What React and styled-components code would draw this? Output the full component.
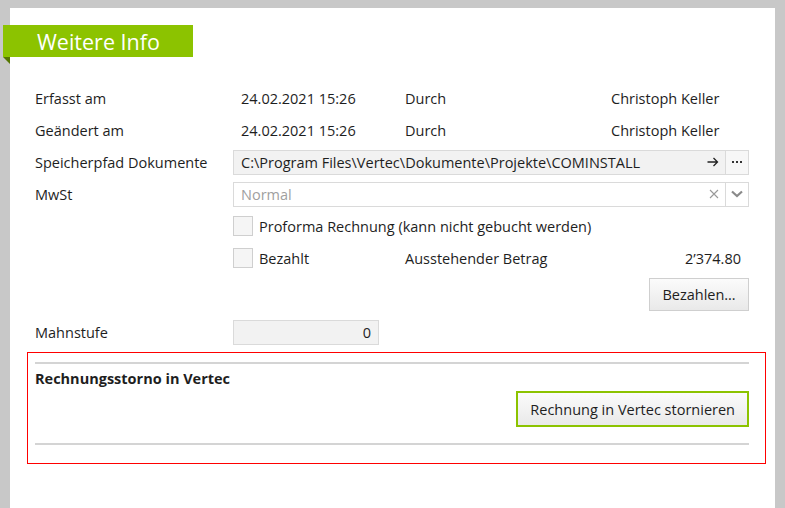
import styled, { createGlobalStyle } from 'styled-components'

const GlobalStyle = createGlobalStyle`
    html, body {
        margin: 0;
        padding: 0;
        background: #c8c8c8;
        font-family: "Open Sans", "Noto Sans", sans-serif;
        font-size: 14.5px;
        color: #1e1e1e;
    }
`;

const Page = styled.div`
    padding: 8px 10px 0 10px;
    height: 500px;
`;

const Panel = styled.div`
    background: #fff;
    height: 100%;
    padding-top: 17px;
    box-sizing: border-box;
`;

const HeaderTab = styled.div`
    position: relative;
    margin-left: -7px;
    width: 190px;
    height: 32px;
    box-sizing: border-box;
    padding-left: 34px;
    background: #8cc300;
    color: #fff;
    font-size: 21.5px;
    line-height: 34px;
    &::after {
        content: '';
        position: absolute;
        left: 0;
        top: 32px;
        border-top: 7px solid #557700;
        border-left: 7px solid transparent;
    }
`;

const Form = styled.div`
    padding: 25px 26px 0 25px;
`;

const Row = styled.div`
    display: flex;
    align-items: center;
    height: 32px;
`;

const Label = styled.div`
    width: 198px;
    flex: none;
`;

const Cell = styled.div`
    width: ${p => p.$w ? `${p.$w}px` : 'auto'};
    flex: ${p => p.$w ? 'none' : '1'};
    padding: 0 8px;
    box-sizing: border-box;
    text-align: ${p => p.$right ? 'right' : 'left'};
    white-space: nowrap;
`;

const Field = styled.div`
    flex: 1;
    display: flex;
    align-items: stretch;
    height: 25px;
    box-sizing: border-box;
    border: 1px solid #dadada;
    background: ${p => p.$readonly ? '#f2f2f2' : '#fff'};
`;

const FieldText = styled.div`
    flex: 1;
    padding: 0 7px;
    line-height: 23px;
    color: ${p => p.$muted ? '#a0a0a0' : '#1e1e1e'};
    text-align: ${p => p.$right ? 'right' : 'left'};
    overflow: hidden;
    white-space: nowrap;
`;

const FieldButton = styled.div`
    width: ${p => p.$w || 22}px;
    display: flex;
    align-items: center;
    justify-content: center;
    border-left: ${p => p.$divider ? '1px solid #dadada' : 'none'};
    background: ${p => p.$bg || 'transparent'};
`;

const SmallField = styled(Field)`
    flex: none;
    width: 146px;
`;

const CheckLabel = styled.label`
    display: flex;
    align-items: center;
    gap: 6px;
    width: 164px;
    flex: none;
    white-space: nowrap;
`;

const Box = styled.span`
    width: 20px;
    height: 20px;
    box-sizing: border-box;
    border: 1px solid #cfcfcf;
    background: #f5f5f5;
    flex: none;
`;

const ButtonRow = styled.div`
    display: flex;
    justify-content: flex-end;
    padding: 4px 0 5px;
`;

const Button = styled.button`
    font-family: inherit;
    font-size: 14.5px;
    color: #1e1e1e;
    height: ${p => p.$primary ? 36 : 33}px;
    min-width: 100px;
    padding: 0 12px;
    border: ${p => p.$primary ? '2px solid #8cc300' : '1px solid #cfcfcf'};
    background: linear-gradient(#fbfbfb, #e9e9e9);
    cursor: pointer;
`;

const StornoBox = styled.div`
    margin: 4px 9px 0 17px;
    border: 1px solid #ff0000;
    padding: 9px 16px 18px 7px;
`;

const Divider = styled.div`
    height: 2px;
    background: #d4d4d4;
`;

const StornoTitle = styled.div`
    font-weight: 700;
    margin-top: 6px;
    line-height: 18px;
`;

const StornoButtonRow = styled(ButtonRow)`
    padding: 3px 0 16px;
`;

const Arrow = () => (
    <svg width="12" height="10" viewBox="0 0 12 10" fill="none" stroke="#222" strokeWidth="1.3">
        <path d="M0.5 5h10M6.5 1l4 4-4 4" />
    </svg>
);

const Dots = () => (
    <svg width="12" height="4" viewBox="0 0 12 4" fill="#333">
        <rect x="1" y="1" width="2" height="2" />
        <rect x="5" y="1" width="2" height="2" />
        <rect x="9" y="1" width="2" height="2" />
    </svg>
);

const Cross = () => (
    <svg width="10" height="10" viewBox="0 0 10 10" stroke="#9a9a9a" strokeWidth="1.1">
        <path d="M1 1l8 8M9 1l-8 8" />
    </svg>
);

const Chevron = () => (
    <svg width="12" height="8" viewBox="0 0 12 8" fill="none" stroke="#8a8a8a" strokeWidth="2.2">
        <path d="M1 1.5l5 4.5 5-4.5" />
    </svg>
);

const App = () => {
    return (
        <>
            <GlobalStyle />
            <Page>
                <Panel>
                    <HeaderTab>Weitere Info</HeaderTab>
                    <Form>
                        <Row>
                            <Label>Erfasst am</Label>
                            <Cell $w={164}>24.02.2021 15:26</Cell>
                            <Cell $w={206}>Durch</Cell>
                            <Cell>Christoph Keller</Cell>
                        </Row>
                        <Row>
                            <Label>Geändert am</Label>
                            <Cell $w={164}>24.02.2021 15:26</Cell>
                            <Cell $w={206}>Durch</Cell>
                            <Cell>Christoph Keller</Cell>
                        </Row>
                        <Row>
                            <Label>Speicherpfad Dokumente</Label>
                            <Field $readonly>
                                <FieldText>C:\Program Files\Vertec\Dokumente\Projekte\COMINSTALL</FieldText>
                                <FieldButton $w={24}><Arrow /></FieldButton>
                                <FieldButton $w={22} $divider $bg="#f7f7f7"><Dots /></FieldButton>
                            </Field>
                        </Row>
                        <Row>
                            <Label>MwSt</Label>
                            <Field>
                                <FieldText $muted>Normal</FieldText>
                                <FieldButton $w={22}><Cross /></FieldButton>
                                <FieldButton $w={22} $divider><Chevron /></FieldButton>
                            </Field>
                        </Row>
                        <Row>
                            <Label />
                            <CheckLabel><Box />Proforma Rechnung (kann nicht gebucht werden)</CheckLabel>
                        </Row>
                        <Row>
                            <Label />
                            <CheckLabel><Box />Bezahlt</CheckLabel>
                            <Cell $w={206}>Ausstehender Betrag</Cell>
                            <Cell $right>2’374.80</Cell>
                        </Row>
                        <ButtonRow>
                            <Button>Bezahlen…</Button>
                        </ButtonRow>
                        <Row>
                            <Label>Mahnstufe</Label>
                            <SmallField $readonly>
                                <FieldText $right>0</FieldText>
                            </SmallField>
                        </Row>
                    </Form>
                    <StornoBox>
                        <Divider />
                        <StornoTitle>Rechnungsstorno in Vertec</StornoTitle>
                        <StornoButtonRow>
                            <Button $primary>Rechnung in Vertec stornieren</Button>
                        </StornoButtonRow>
                        <Divider />
                    </StornoBox>
                </Panel>
            </Page>
        </>
    );
};

export default App
